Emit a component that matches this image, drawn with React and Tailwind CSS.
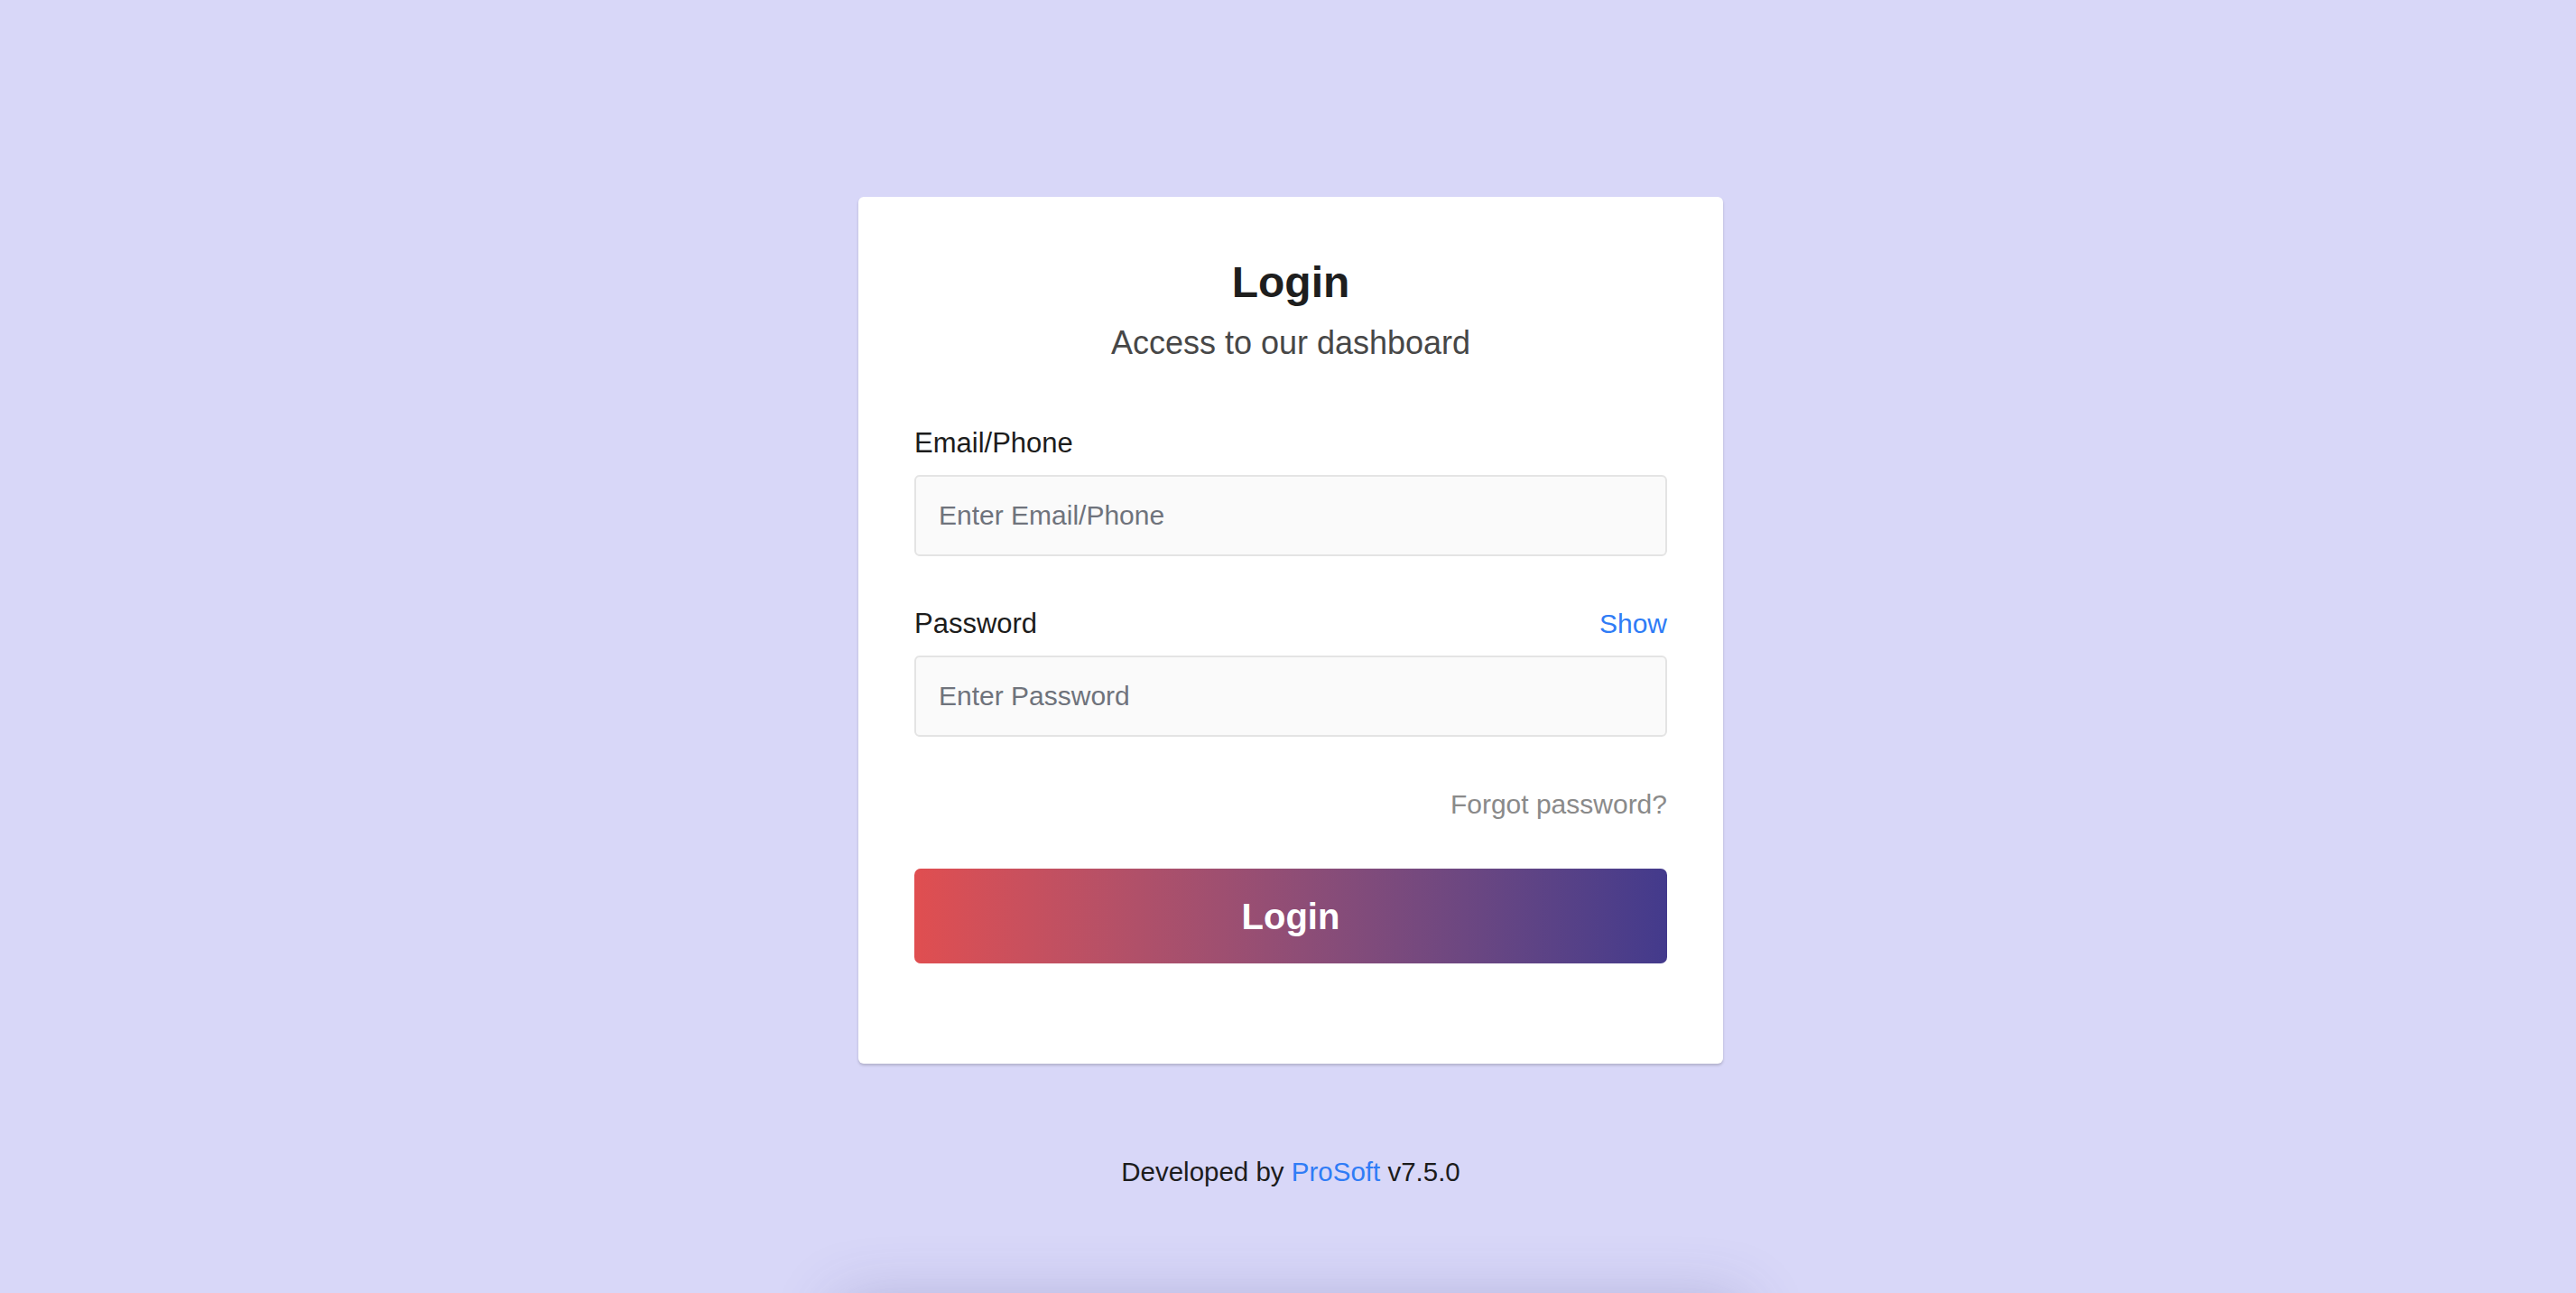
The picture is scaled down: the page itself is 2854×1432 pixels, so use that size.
import React, { useState } from "react";

const Field = ({ label, placeholder, type = "text", action }) => (
  <div>
    <div className="flex items-center justify-between">
      <label className="text-[31px] leading-[40px] text-[#1c1c1c]">{label}</label>
      {action}
    </div>
    <input
      type={type}
      placeholder={placeholder}
      className="mt-[15px] block h-[90px] w-full rounded-[6px] border-2 border-[#e4e4e4] bg-[#fafafa] px-[25px] text-[30px] text-[#333] outline-none placeholder:text-[#6f737c]"
    />
  </div>
);

const App = () => {
  const [show, setShow] = useState(false);

  return (
    <div
      className="flex h-[1432px] flex-col items-center overflow-hidden bg-[#d8d7f8] pt-[218px] pl-[6px]"
      style={{ fontFamily: '"Liberation Sans", Arial, sans-serif' }}
    >
      {/* Tarjeta de login */}
      <div className="w-[958px] rounded-[6px] bg-white px-[62px] pt-[67px] pb-[111px] shadow-[0_2px_3px_rgba(0,0,0,0.18)]">
        <h1 className="text-center text-[48px] font-bold leading-[56px] text-[#1e1e1e]">
          Login
        </h1>
        <p className="mt-[17px] text-center text-[36px] leading-[44px] text-[#474747]">
          Access to our dashboard
        </p>

        <div className="mt-[69px]">
          <Field label="Email/Phone" placeholder="Enter Email/Phone" />
        </div>

        <div className="mt-[55px]">
          <Field
            label="Password"
            placeholder="Enter Password"
            type={show ? "text" : "password"}
            action={
              <button
                onClick={() => setShow(!show)}
                className="text-[30px] leading-[40px] text-[#2f7cf6]"
              >
                {show ? "Hide" : "Show"}
              </button>
            }
          />
        </div>

        <div className="mt-[55px] flex justify-end">
          <a className="text-[30px] leading-[40px] text-[#8a8a8a]">Forgot password?</a>
        </div>

        <button className="mt-[51px] flex h-[105px] w-full items-center justify-center rounded-[7px] bg-gradient-to-r from-[#e04e50] to-[#433a8c] text-[40px] font-semibold text-white">
          Login
        </button>
      </div>

      {/* Pie */}
      <p className="mt-[100px] text-[29.5px] leading-[40px] text-[#1c1c1c]">
        Developed by <span className="text-[#2f7cf6]">ProSoft</span> v7.5.0
      </p>

      {/* sombra de la tarjeta de abajo */}
      <div className="mt-[125px] h-[200px] w-[1000px] shrink-0 rounded-[6px] bg-[#d8d7f8] shadow-[0_0_70px_rgba(70,70,140,0.3)]"></div>
    </div>
  );
};

export default App;
